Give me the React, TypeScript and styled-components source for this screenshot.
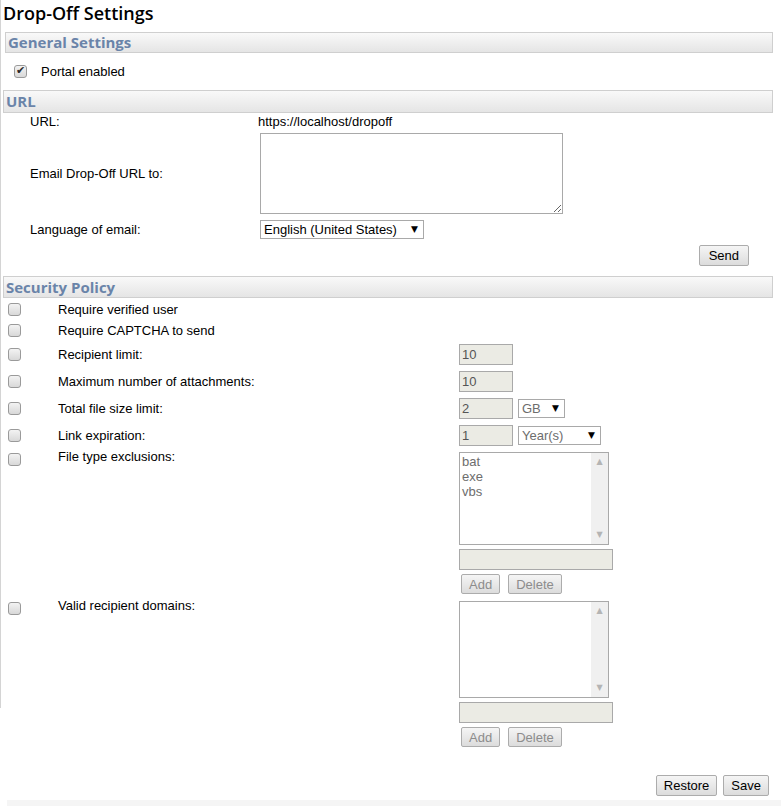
import styled, { createGlobalStyle } from 'styled-components';

const GlobalStyle = createGlobalStyle`
  html, body {
    margin: 0;
    padding: 0;
    background: #fff;
  }
  body {
    font-family: "Liberation Sans", Arial, sans-serif;
    font-size: 13px;
    color: #000;
  }
`;

const Page = styled.div`
  position: relative;
  width: 781px;
  height: 806px;
  overflow: hidden;

  &::before {
    content: '';
    position: absolute;
    left: 0;
    top: 0;
    width: 1px;
    height: 708px;
    background: #d4d4d4;
  }
`;

const Title = styled.h1`
  margin: 0;
  height: 32px;
  padding-left: 3px;
  font-family: "Open Sans", "Liberation Sans", sans-serif;
  font-weight: 600;
  font-size: 18px;
  line-height: 26px;
  color: #000;
`;

const SectionBar = styled.div<{ $left: number; $height: number }>`
  box-sizing: border-box;
  height: ${p => p.$height}px;
  margin-left: ${p => p.$left}px;
  margin-right: 8px;
  padding-left: 2px;
  border: 1px solid #cfcfcf;
  background: linear-gradient(to bottom, #f9f9f9 0%, #e5e5e5 100%);
  font-family: "Open Sans", "Liberation Sans", sans-serif;
  font-weight: 700;
  font-size: 15px;
  line-height: ${p => p.$height - 2}px;
  color: #6a84a9;
`;

const Check = styled.input.attrs({ type: 'checkbox', readOnly: true })`
  appearance: none;
  -webkit-appearance: none;
  position: relative;
  box-sizing: border-box;
  flex: none;
  margin: 0;
  width: 13px;
  height: 13px;
  border: 1px solid #9a9a9a;
  border-radius: 3px;
  background: linear-gradient(to bottom, #f3f3f3 0%, #d8d8d8 100%);

  &:checked::after {
    content: '\\2714';
    position: absolute;
    left: 1px;
    top: -2px;
    font-family: "DejaVu Sans", sans-serif;
    font-size: 11px;
    color: #2a2a2a;
  }
`;

const CheckRow = styled.div`
  display: flex;
  align-items: center;
  height: 37px;
  padding-left: 14px;
  gap: 14px;
  line-height: 15px;
`;

const UrlGrid = styled.div`
  display: grid;
  grid-template-columns: 228px 1fr;
  grid-template-rows: 17px 87px 25px;
  align-items: center;
  padding-left: 30px;
  line-height: 16px;
`;

const TextArea = styled.textarea`
  box-sizing: border-box;
  width: 303px;
  height: 81px;
  margin-left: 2px;
  border: 1px solid #a9a9a9;
  resize: both;
  font-family: "Liberation Sans", Arial, sans-serif;
  font-size: 13px;
`;

const SelectWrap = styled.span<{ $width: number; $indent?: number }>`
  position: relative;
  display: inline-block;
  width: ${p => p.$width}px;
  margin-left: ${p => p.$indent ?? 0}px;

  &::after {
    content: '\\25BC';
    position: absolute;
    right: 6px;
    top: 4px;
    font-family: "DejaVu Sans", sans-serif;
    font-size: 9px;
    line-height: 11px;
    color: #000;
    pointer-events: none;
  }
`;

const Select = styled.select<{ $muted?: boolean }>`
  appearance: none;
  -webkit-appearance: none;
  box-sizing: border-box;
  width: 100%;
  height: 19px;
  margin: 0;
  padding: 0 0 0 3px;
  border: 1px solid #a9a9a9;
  border-radius: 0;
  background: #fff;
  font-family: "Liberation Sans", Arial, sans-serif;
  font-size: 13px;
  color: ${p => (p.$muted ? '#6d6d6d' : '#000')};
  opacity: 1;
`;

const ButtonRow = styled.div<{ $top: number; $right: number; $bottom: number }>`
  display: flex;
  justify-content: flex-end;
  gap: 6px;
  margin-top: ${p => p.$top}px;
  margin-bottom: ${p => p.$bottom}px;
  padding-right: ${p => p.$right}px;
`;

const Button = styled.button<{ $height?: number; $pad?: number }>`
  box-sizing: border-box;
  height: ${p => p.$height ?? 21}px;
  padding: 0 ${p => p.$pad ?? 7}px;
  margin: 0;
  border: 1px solid #acacac;
  border-radius: 2px;
  background: linear-gradient(to bottom, #f5f5f5 0%, #dcdcdc 100%);
  font-family: "Liberation Sans", Arial, sans-serif;
  font-size: 13px;
  line-height: 17px;
  color: #000;

  &:disabled {
    color: #8c8c8c;
  }
`;

const PolicyList = styled.div`
  padding-top: 1px;
`;

const PolicyRow = styled.div<{ $kind: 'line' | 'field' | 'list' }>`
  display: grid;
  grid-template-columns: 50px 401px 1fr;
  padding-left: 8px;
  height: ${p => (p.$kind === 'line' ? '21px' : p.$kind === 'field' ? '27px' : 'auto')};
  align-items: ${p => (p.$kind === 'list' ? 'start' : 'center')};
  padding-bottom: ${p => (p.$kind === 'list' ? 4 : 0)}px;
  line-height: 15px;

  & > ${Check} {
    margin-top: ${p => (p.$kind === 'list' ? 4 : 0)}px;
  }
`;

const Controls = styled.div`
  display: flex;
  align-items: center;
`;

const ListControls = styled.div`
  display: flex;
  flex-direction: column;
  align-items: flex-start;
  padding-top: 3px;
`;

const TextInput = styled.input.attrs({ type: 'text', disabled: true })<{ $width: number }>`
  box-sizing: border-box;
  width: ${p => p.$width}px;
  height: 21px;
  margin: 0;
  padding: 0 2px;
  border: 1px solid #a9a9a9;
  background: #ebebe4;
  font-family: "Liberation Sans", Arial, sans-serif;
  font-size: 13px;
  color: #555;
`;

const ListBox = styled.div<{ $height: number }>`
  box-sizing: border-box;
  display: flex;
  width: 150px;
  height: ${p => p.$height}px;
  border: 1px solid #a9a9a9;
  background: #fff;
  margin-bottom: 4px;
`;

const ListItems = styled.div`
  flex: 1;
  padding: 1px 2px;
  color: #6d6d6d;
  line-height: 15px;
`;

const ScrollTrack = styled.div`
  display: flex;
  flex-direction: column;
  justify-content: space-between;
  align-items: center;
  width: 17px;
  padding: 4px 0 5px;
  background: #f0f0f0;
  color: #b4b4b4;
  font-family: "DejaVu Sans", sans-serif;
  font-size: 8px;
  line-height: 9px;
`;

const SmallButtons = styled.div`
  display: flex;
  gap: 8px;
  margin-top: 4px;
  padding-left: 2px;
`;

const FooterStrip = styled.div`
  height: 6px;
  margin-top: 4px;
  margin-left: 7px;
  background: #f5f5f5;
`;

function FieldList({ items, height }: { items: string[]; height: number }) {
  return (
    <ListControls>
      <ListBox $height={height}>
        <ListItems>
          {items.map(item => (
            <div key={item}>{item}</div>
          ))}
        </ListItems>
        <ScrollTrack>
          <span>▲</span>
          <span>▼</span>
        </ScrollTrack>
      </ListBox>
      <TextInput $width={154} />
      <SmallButtons>
        <Button disabled $height={20}>Add</Button>
        <Button disabled $height={20}>Delete</Button>
      </SmallButtons>
    </ListControls>
  );
}

export default function App() {
  return (
    <Page>
      <GlobalStyle />
      <Title>Drop-Off Settings</Title>

      <SectionBar $left={5} $height={21}>General Settings</SectionBar>
      <CheckRow>
        <Check defaultChecked />
        <span>Portal enabled</span>
      </CheckRow>

      <SectionBar $left={3} $height={23}>URL</SectionBar>
      <UrlGrid>
        <span>URL:</span>
        <span>https://localhost/dropoff</span>
        <span>Email Drop-Off URL to:</span>
        <TextArea />
        <span>Language of email:</span>
        <SelectWrap $width={164} $indent={2}>
          <Select defaultValue="en-US">
            <option value="en-US">English (United States)</option>
          </Select>
        </SelectWrap>
      </UrlGrid>
      <ButtonRow $top={3} $right={32} $bottom={10}>
        <Button $pad={9}>Send</Button>
      </ButtonRow>

      <SectionBar $left={3} $height={22}>Security Policy</SectionBar>
      <PolicyList>
        <PolicyRow $kind="line">
          <Check />
          <span>Require verified user</span>
        </PolicyRow>
        <PolicyRow $kind="line">
          <Check />
          <span>Require CAPTCHA to send</span>
        </PolicyRow>
        <PolicyRow $kind="field">
          <Check />
          <span>Recipient limit:</span>
          <Controls>
            <TextInput $width={54} defaultValue="10" />
          </Controls>
        </PolicyRow>
        <PolicyRow $kind="field">
          <Check />
          <span>Maximum number of attachments:</span>
          <Controls>
            <TextInput $width={54} defaultValue="10" />
          </Controls>
        </PolicyRow>
        <PolicyRow $kind="field">
          <Check />
          <span>Total file size limit:</span>
          <Controls>
            <TextInput $width={54} defaultValue="2" />
            <SelectWrap $width={47} $indent={5}>
              <Select $muted disabled defaultValue="GB">
                <option value="GB">GB</option>
              </Select>
            </SelectWrap>
          </Controls>
        </PolicyRow>
        <PolicyRow $kind="field">
          <Check />
          <span>Link expiration:</span>
          <Controls>
            <TextInput $width={54} defaultValue="1" />
            <SelectWrap $width={83} $indent={5}>
              <Select $muted disabled defaultValue="y">
                <option value="y">Year(s)</option>
              </Select>
            </SelectWrap>
          </Controls>
        </PolicyRow>
        <PolicyRow $kind="list">
          <Check />
          <span>File type exclusions:</span>
          <FieldList items={['bat', 'exe', 'vbs']} height={93} />
        </PolicyRow>
        <PolicyRow $kind="list">
          <Check />
          <span>Valid recipient domains:</span>
          <FieldList items={[]} height={97} />
        </PolicyRow>
      </PolicyList>

      <ButtonRow $top={24} $right={12} $bottom={0}>
        <Button>Restore</Button>
        <Button>Save</Button>
      </ButtonRow>
      <FooterStrip />
    </Page>
  );
}
